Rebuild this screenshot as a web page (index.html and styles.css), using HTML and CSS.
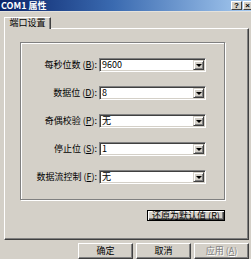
FILE: index.html
```html
<!DOCTYPE html>
<html>
<head>
	<meta charset="utf-8">
	<title>COM1 属性</title>
	<link rel="stylesheet" href="styles.css">
</head>
<body>
	<div class="titlebar">
		<span class="title">COM1 属性</span>
		<span class="tbtn">?</span>
		<span class="tbtn close">×</span>
	</div>
	<div class="sheet">
		<div class="tabs">
			<div class="tab">端口设置</div>
		</div>
		<div class="panel">
			<div class="group">
				<div class="rows">
					<label class="lbl">每秒位数 (<u>B</u>):</label>
					<div class="combo"><span class="val">9600</span><span class="drop"></span></div>
					<label class="lbl">数据位 (<u>D</u>):</label>
					<div class="combo"><span class="val">8</span><span class="drop"></span></div>
					<label class="lbl">奇偶校验 (<u>P</u>):</label>
					<div class="combo"><span class="val">无</span><span class="drop"></span></div>
					<label class="lbl">停止位 (<u>S</u>):</label>
					<div class="combo"><span class="val">1</span><span class="drop"></span></div>
					<label class="lbl">数据流控制 (<u>F</u>):</label>
					<div class="combo"><span class="val">无</span><span class="drop"></span></div>
				</div>
			</div>
			<div class="restore-row">
				<div class="btn restore">还原为默认值 (<u>R</u>)</div>
			</div>
		</div>
		<div class="actions">
			<div class="btn">确定</div>
			<div class="btn">取消</div>
			<div class="btn disabled">应用 (<u>A</u>)</div>
		</div>
	</div>
</body>
</html>
```
FILE: styles.css
```css
*{margin:0;padding:0;box-sizing:border-box;}
body{
	width:251px;
	height:259px;
	overflow:hidden;
	background:#d4d0c8;
	font-family:"Noto Sans CJK SC","Liberation Sans",sans-serif;
	font-size:9px;
	color:#000;
}
.titlebar{
	height:12px;
	display:flex;
	align-items:center;
	padding-left:1px;
	background:linear-gradient(to right,#0a246a 0%,#3a6ab0 45%,#a6caf0 100%);
	border-bottom:1px solid #e4e2dc;
}
.title{
	flex:1;
	color:#fff;
	font-weight:bold;
	font-size:9px;
	line-height:11px;
}
.tbtn{
	width:11px;
	height:9px;
	margin-left:1px;
	background:#d4d0c8;
	border:1px solid;
	border-color:#fff #404040 #404040 #fff;
	font-family:"Liberation Sans",sans-serif;
	font-size:8px;
	font-weight:bold;
	line-height:7px;
	text-align:center;
}
.close{width:8px;overflow:hidden;border-right:none;}
.sheet{padding:5px 2px 0 4px;}
.tabs{display:flex;height:11px;}
.tab{
	width:47px;
	height:12px;
	background:#d4d0c8;
	border:1px solid;
	border-color:#fff #404040 transparent #fff;
	border-bottom:none;
	box-shadow:inset -1px 0 #808080;
	text-align:center;
	line-height:10px;
	position:relative;
	z-index:1;
}
.panel{
	width:245px;
	height:212px;
	border-style:solid;
	border-width:1px 1px 1px 1px;
	border-color:#fff #404040 #404040 #fff;
	box-shadow:inset -1px -1px #808080;
	padding:13px 0 0 15px;
}
.group{
	width:205px;
	height:158px;
	border:1px solid #808080;
	box-shadow:inset 1px 1px #fff,1px 1px #fff;
}
.rows{
	display:grid;
	grid-template-columns:76px 107px;
	grid-auto-rows:14px;
	column-gap:2px;
	row-gap:14px;
	padding-top:15px;
}
.lbl{
	text-align:right;
	line-height:14px;
	white-space:nowrap;
}
.combo{
	display:flex;
	align-items:center;
	background:#fff;
	border:1px solid;
	border-color:#808080 #fff #fff #808080;
	box-shadow:inset 1px 1px #404040,inset -1px -1px #d4d0c8;
	padding:1px 1px 1px 2px;
}
.val{flex:1;line-height:12px;}
.drop{
	width:11px;
	height:10px;
	background:#d4d0c8;
	border:1px solid;
	border-color:#d4d0c8 #404040 #404040 #d4d0c8;
	box-shadow:inset 1px 1px #fff,inset -1px -1px #808080;
	display:flex;
	align-items:center;
	justify-content:center;
}
.drop::after{
	content:"";
	border-left:3px solid transparent;
	border-right:3px solid transparent;
	border-top:3px solid #000;
}
.restore-row{
	width:205px;
	display:flex;
	justify-content:flex-end;
	padding-top:10px;
}
.btn{
	width:55px;
	height:16px;
	background:#d4d0c8;
	border:1px solid;
	border-color:#fff #404040 #404040 #fff;
	box-shadow:inset -1px -1px #808080;
	text-align:center;
	line-height:14px;
}
.restore{
	width:78px;
	height:11px;
	line-height:9px;
	border:1px solid #000;
	box-shadow:inset 1px 1px #fff,inset -1px -1px #404040,inset -2px -2px #808080;
}
.actions{
	display:flex;
	justify-content:flex-end;
	gap:3px;
	padding-top:3px;
	padding-right:0;
}
.disabled{color:#808080;text-shadow:1px 1px #fff;}
u{text-decoration:underline;}
```
